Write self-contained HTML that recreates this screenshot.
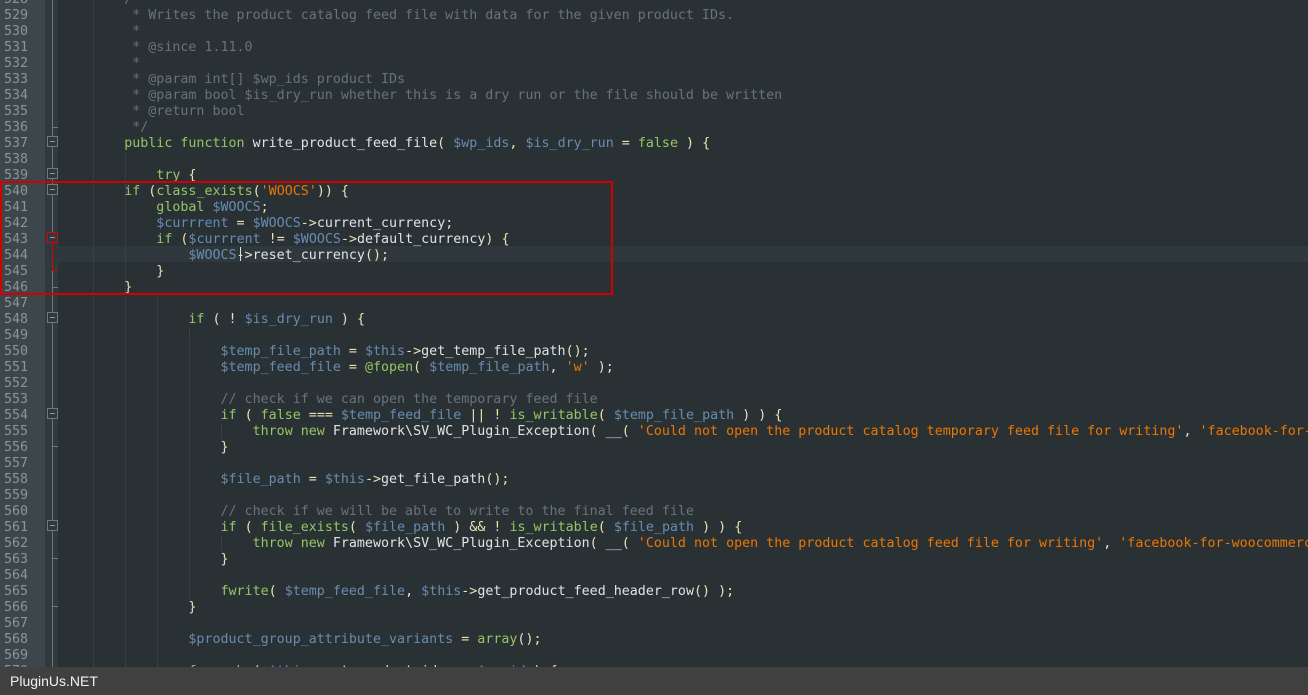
<!DOCTYPE html>
<html><head><meta charset="utf-8">
<style>
html,body{margin:0;padding:0}
body{width:1308px;height:695px;overflow:hidden;background:#293134;position:relative;font-family:"Liberation Mono",monospace;}
#ln{position:absolute;left:0;top:0;width:45px;height:695px;background:#3d474b;}
#fold{position:absolute;left:45px;top:0;width:13px;height:695px;background:#30393d;}
.cur{position:absolute;left:45px;top:246px;width:1263px;height:16px;background:#2f393d;}
pre{margin:0;position:absolute;font-size:13.33px;line-height:16px;white-space:pre;}
#nums{left:4px;top:-8px;color:#8a959a;}
#code{left:60px;top:-8px;color:#E0E2E4;width:1248px;overflow:hidden;}
.k{color:#93C763}.v{color:#678CB1}.s{color:#EC7600}.c{color:#66747B}.o{color:#E8E2B7}
.g{position:absolute;border-left:1px dotted #414c50;}
.fl{position:absolute;left:52px;width:1px;background:#6a7a82;}
.bx{position:absolute;left:47px;width:9px;height:9px;border:1px solid #6a7a82;background:#30393d;}
.bx:after{content:"";position:absolute;left:2px;top:4px;width:5px;height:1px;background:#8a989f;}
.tk{position:absolute;left:52px;width:6px;height:1px;background:#6a7a82;}
#bar{position:absolute;left:0;top:667px;width:1308px;height:28px;background:#404040;color:#f2f2f2;font-family:"Liberation Sans",sans-serif;font-size:14px;line-height:28px;padding-left:10px;box-sizing:border-box;}
#red{position:absolute;left:0;top:181px;width:609px;height:110px;border:2px solid #d40000;}
</style></head><body>
<div id="ln"></div>
<div id="fold"></div>
<div class="cur"></div>
<div class="g" style="left:93px;top:0;height:667px"></div>
<div class="g" style="left:125px;top:152px;height:515px"></div>
<div class="g" style="left:157px;top:296px;height:371px"></div>
<div class="g" style="left:189px;top:328px;height:272px"></div>
<div class="g" style="left:221px;top:424px;height:16px"></div>
<div class="g" style="left:221px;top:536px;height:16px"></div>
<div class="fl" style="top:0;height:667px"></div>
<div class="tk" style="top:127px"></div>
<div class="bx" style="top:136px"></div>
<div class="bx" style="top:168px"></div>
<div class="bx" style="top:184px"></div>
<div class="bx" style="top:232px;border-color:#e00000"></div>
<div style="position:absolute;left:52px;top:243px;width:1px;height:28px;background:#e00000"></div>
<div style="position:absolute;left:52px;top:270px;width:6px;height:1px;background:#e00000"></div>
<div class="tk" style="top:287px"></div>
<div class="bx" style="top:312px"></div>
<div class="bx" style="top:408px"></div>
<div class="tk" style="top:446px"></div>
<div class="bx" style="top:520px"></div>
<div class="tk" style="top:558px"></div>
<div class="tk" style="top:606px"></div>
<pre id="nums">528
529
530
531
532
533
534
535
536
537
538
539
540
541
542
543
544
545
546
547
548
549
550
551
552
553
554
555
556
557
558
559
560
561
562
563
564
565
566
567
568
569
570</pre>
<pre id="code"><span class="c">        /**</span>
<span class="c">         * Writes the product catalog feed file with data for the given product IDs.</span>
<span class="c">         *</span>
<span class="c">         * @since 1.11.0</span>
<span class="c">         *</span>
<span class="c">         * @param int[] $wp_ids product IDs</span>
<span class="c">         * @param bool $is_dry_run whether this is a dry run or the file should be written</span>
<span class="c">         * @return bool</span>
<span class="c">         */</span>
        <span class="k">public function</span> write_product_feed_file<span class="o">(</span> <span class="v">$wp_ids</span><span class="o">,</span> <span class="v">$is_dry_run</span> <span class="o">=</span> <span class="k">false</span> <span class="o">)</span> <span class="o">{</span>

            <span class="k">try</span> <span class="o">{</span>
        <span class="k">if</span> <span class="o">(</span><span class="k">class_exists</span><span class="o">(</span><span class="s">'WOOCS'</span><span class="o">))</span> <span class="o">{</span>
            <span class="k">global</span> <span class="v">$WOOCS</span><span class="o">;</span>
            <span class="v">$currrent</span> <span class="o">=</span> <span class="v">$WOOCS</span><span class="o">-&gt;</span>current_currency<span class="o">;</span>
            <span class="k">if</span> <span class="o">(</span><span class="v">$currrent</span> <span class="o">!=</span> <span class="v">$WOOCS</span><span class="o">-&gt;</span>default_currency<span class="o">)</span> <span class="o">{</span>
                <span class="v">$WOOCS</span><span class="o">-&gt;</span>reset_currency<span class="o">();</span>
            <span class="o">}</span>
        <span class="o">}</span>

                <span class="k">if</span> <span class="o">(</span> <span class="o">!</span> <span class="v">$is_dry_run</span> <span class="o">)</span> <span class="o">{</span>

                    <span class="v">$temp_file_path</span> <span class="o">=</span> <span class="v">$this</span><span class="o">-&gt;</span>get_temp_file_path<span class="o">();</span>
                    <span class="v">$temp_feed_file</span> <span class="o">=</span> <span class="k">@fopen</span><span class="o">(</span> <span class="v">$temp_file_path</span><span class="o">,</span> <span class="s">'w'</span> <span class="o">);</span>

<span class="c">                    // check if we can open the temporary feed file</span>
                    <span class="k">if</span> <span class="o">(</span> <span class="k">false</span> <span class="o">===</span> <span class="v">$temp_feed_file</span> <span class="o">||</span> <span class="o">!</span> <span class="k">is_writable</span><span class="o">(</span> <span class="v">$temp_file_path</span> <span class="o">)</span> <span class="o">)</span> <span class="o">{</span>
                        <span class="k">throw new</span> Framework\SV_WC_Plugin_Exception<span class="o">(</span> __<span class="o">(</span> <span class="s">'Could not open the product catalog temporary feed file for writing'</span><span class="o">,</span> <span class="s">'facebook-for-woo</span></span>
                    <span class="o">}</span>

                    <span class="v">$file_path</span> <span class="o">=</span> <span class="v">$this</span><span class="o">-&gt;</span>get_file_path<span class="o">();</span>

<span class="c">                    // check if we will be able to write to the final feed file</span>
                    <span class="k">if</span> <span class="o">(</span> <span class="k">file_exists</span><span class="o">(</span> <span class="v">$file_path</span> <span class="o">)</span> <span class="o">&amp;&amp;</span> <span class="o">!</span> <span class="k">is_writable</span><span class="o">(</span> <span class="v">$file_path</span> <span class="o">)</span> <span class="o">)</span> <span class="o">{</span>
                        <span class="k">throw new</span> Framework\SV_WC_Plugin_Exception<span class="o">(</span> __<span class="o">(</span> <span class="s">'Could not open the product catalog feed file for writing'</span><span class="o">,</span> <span class="s">'facebook-for-woocommerce'</span></span>
                    <span class="o">}</span>

                    <span class="k">fwrite</span><span class="o">(</span> <span class="v">$temp_feed_file</span><span class="o">,</span> <span class="v">$this</span><span class="o">-&gt;</span>get_product_feed_header_row<span class="o">()</span> <span class="o">);</span>
                <span class="o">}</span>

                <span class="v">$product_group_attribute_variants</span> <span class="o">=</span> <span class="k">array</span><span class="o">();</span>

                <span class="k">foreach</span> <span class="o">(</span> <span class="v">$this</span><span class="o">-&gt;</span>get_product_ids <span class="k">as</span> <span class="v">$wp_id</span> <span class="o">)</span> <span class="o">{</span></pre>
<div style="position:absolute;left:240px;top:247px;width:1px;height:14px;background:#e0e2e4"></div>
<div id="red"></div>
<div id="bar">PluginUs.NET</div>
</body></html>
